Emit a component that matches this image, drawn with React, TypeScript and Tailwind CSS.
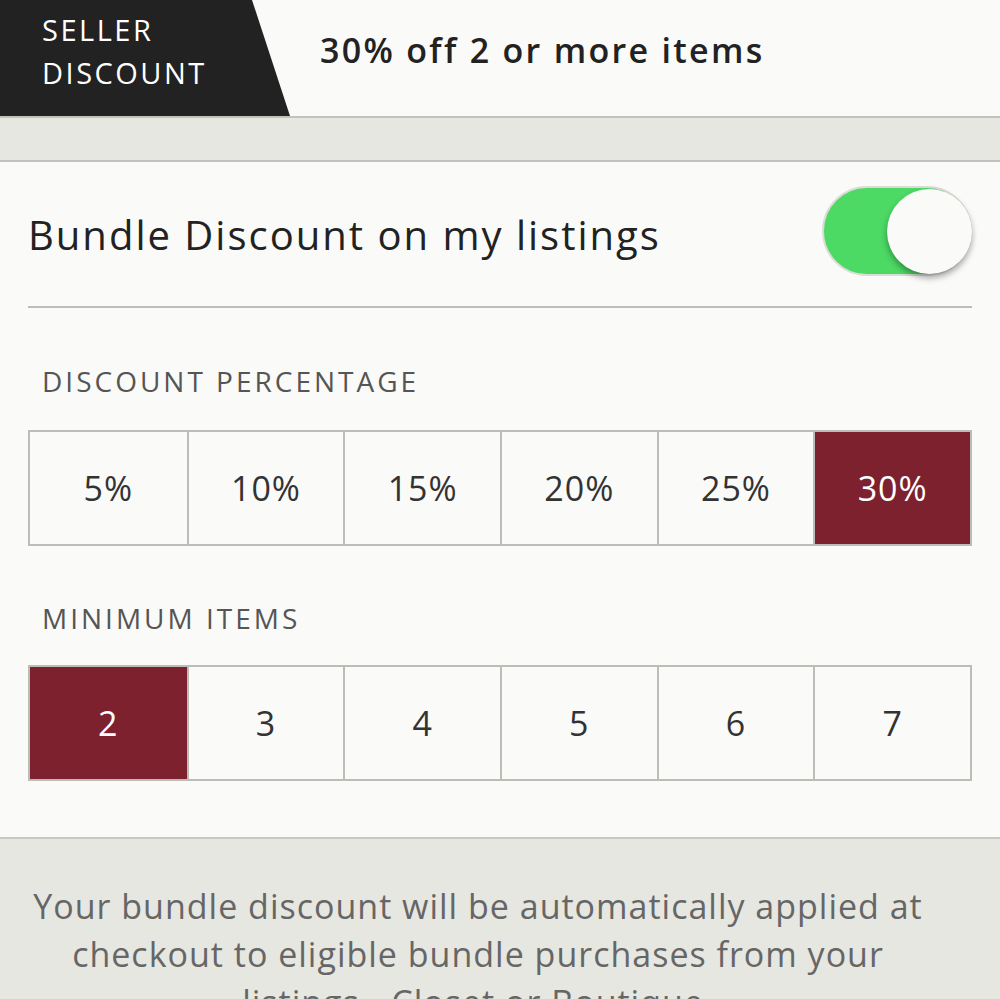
import { useState } from "react";

const percents = ["5%", "10%", "15%", "20%", "25%", "30%"];
const minItems = ["2", "3", "4", "5", "6", "7"];

function OptionRow({ options, selected, onSelect }: { options: string[]; selected: string; onSelect: (v: string) => void }) {
  return (
    <div className="grid grid-cols-6 border-2 border-[#bdbdb7] bg-[#fafaf8]">
      {options.map((o, i) => (
        <button
          key={o}
          onClick={() => onSelect(o)}
          className={`h-[112px] flex items-center justify-center text-[34px] tracking-[1px] ${i > 0 ? "border-l-2 border-[#bdbdb7]" : ""} ${
            selected === o ? "bg-[#7d212e] text-white" : "text-[#333]"
          }`}
        >
          {o}
        </button>
      ))}
    </div>
  );
}

export default function App() {
  const [enabled, setEnabled] = useState(true);
  const [pct, setPct] = useState("30%");
  const [min, setMin] = useState("2");

  return (
    <div className="h-[999px] overflow-hidden bg-[#e7e7e1]" style={{ fontFamily: "'Open Sans', Lato, sans-serif" }}>
      {/* Header */}
      <div className="h-[118px] flex items-center bg-[#fafaf8] border-b-2 border-[#c2c2bc]">
        <div className="h-full w-[290px] bg-[#222] [clip-path:polygon(0_0,252px_0,290px_100%,0_100%)] pl-[42px] pb-[14px] flex flex-col justify-center text-white text-[29px] leading-[43px] tracking-[2.5px]">
          <span>SELLER</span>
          <span>DISCOUNT</span>
        </div>
        <div className="ml-[30px] pb-[16px] text-[34px] font-semibold tracking-[2.3px] text-[#222]">30% off 2 or more items</div>
      </div>

      {/* Gray band */}
      <div className="h-[44px] bg-[#e7e7e1] border-b-2 border-[#c2c2bc]" />

      {/* Settings panel */}
      <div className="bg-[#fafaf8] px-[28px] pb-[56px] border-b-2 border-[#c8c8c2]">
        <div className="h-[146px] flex items-center justify-between border-b-2 border-[#bdbdb7]">
          <span className="text-[40px] tracking-[2px] text-[#222] pt-[2px]">Bundle Discount on my listings</span>
          <button
            onClick={() => setEnabled(!enabled)}
            className={`relative w-[150px] h-[90px] rounded-full border-2 border-[#dcdcd6] -mt-[6px] ${enabled ? "bg-[#4cd964]" : "bg-[#fafaf8]"}`}
          >
            <span
              className={`absolute top-[1px] w-[85px] h-[85px] rounded-full bg-[#fafaf8] shadow-[0_4px_6px_rgba(0,0,0,0.35)] ${enabled ? "right-[-2px]" : "left-0"}`}
            />
          </button>
        </div>

        <div className="pl-[14px] pt-[54px] pb-[30px] text-[28px] leading-[38px] tracking-[3px] text-[#555]">DISCOUNT PERCENTAGE</div>
        <OptionRow options={percents} selected={pct} onSelect={setPct} />

        <div className="pl-[14px] pt-[53px] pb-[28px] text-[28px] leading-[38px] tracking-[3px] text-[#555]">MINIMUM ITEMS</div>
        <OptionRow options={minItems} selected={min} onSelect={setMin} />
      </div>

      {/* Footer note */}
      <div className="pt-[43px] pr-[44px] text-center text-[34px] leading-[48px] tracking-[1px] text-[#666]">
        Your bundle discount will be automatically applied at
        <br />
        checkout to eligible bundle purchases from your
        <br />
        listings - Closet or Boutique.
      </div>
    </div>
  );
}
